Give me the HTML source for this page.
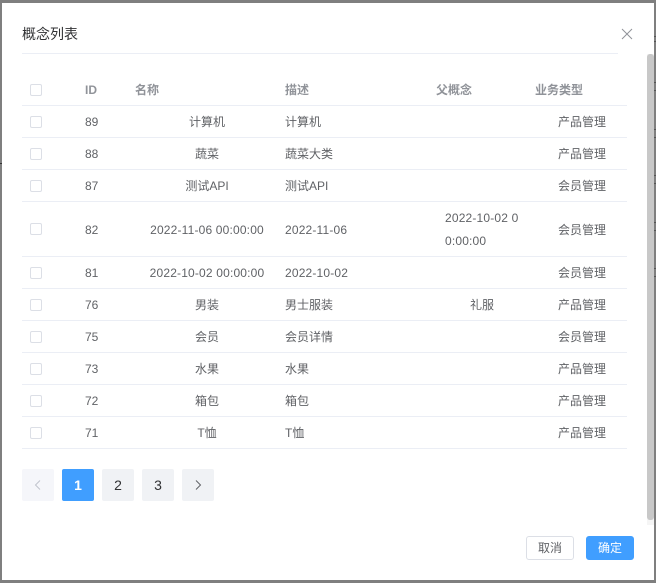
<!DOCTYPE html>
<html><head><meta charset="utf-8">
<style>
html,body{margin:0;padding:0;width:656px;height:583px;overflow:hidden;background:#7f7f7f}
body{position:relative;font-family:"WenQuanYi Zen Hei","Liberation Sans","Noto Sans CJK SC",sans-serif;font-size:12px;color:#606266}
#d{position:absolute;left:2px;top:3px;width:652px;height:577px;background:#fff}
.t,.c,.l,.b,.n{position:absolute}
.t{white-space:nowrap;line-height:16px;height:16px}
.m{transform:translateX(-50%)}
.s{letter-spacing:.17px}
.h{color:#909399;font-weight:bold}
.l{left:22px;width:605px;height:1px;background:#ebeef5}
.c{left:30px;width:10px;height:10px;border:1px solid #dcdfe6;border-radius:2px;background:#fff}
.n{top:469px;width:32px;height:32px;border-radius:2px;background:#f0f2f5;color:#303133;font-size:14px;line-height:32px;text-align:center}
.b{top:536px;height:24px;width:48px;box-sizing:border-box;border-radius:3px;line-height:22px;text-align:center;font-size:12px}
.k{position:absolute;left:654px;width:2px;height:1px;background:#555}
</style></head><body>
<div id="d"></div>
<div class="k" style="top:36px"></div><div class="k" style="top:41px"></div>
<div class="k" style="top:82px"></div><div class="k" style="top:90px"></div>
<div class="k" style="top:129px"></div><div class="k" style="top:137px"></div>
<div class="k" style="top:175px"></div><div class="k" style="top:183px"></div>
<div class="k" style="top:222px"></div><div class="k" style="top:230px"></div>
<div class="k" style="top:268px"></div><div class="k" style="top:276px"></div>
<div style="position:absolute;left:0;top:163px;width:2px;height:1px;background:#333"></div>

<div class="t" style="left:22px;top:26px;font-size:14px;color:#303133">概念列表</div>
<svg style="position:absolute;left:621px;top:28px" width="12" height="12" viewBox="0 0 12 12"><path d="M1 1L11 11M11 1L1 11" stroke="#909399" stroke-width="1" fill="none"/></svg>
<div class="l" style="top:53px;width:596px"></div>

<div style="position:absolute;left:647px;top:54px;width:7px;height:471px;background:#f5f5f5"></div>
<div style="position:absolute;left:647px;top:54px;width:7px;height:466px;background:#c8c8c8;border-radius:3px"></div>

<div class="c" style="top:84px"></div>
<div class="t h" style="left:85px;top:82px">ID</div>
<div class="t h" style="left:135px;top:82px">名称</div>
<div class="t h" style="left:285px;top:82px">描述</div>
<div class="t h" style="left:436px;top:82px">父概念</div>
<div class="t h" style="left:535px;top:82px">业务类型</div>
<div class="l" style="top:105px"></div>

<div class="c" style="top:116px"></div>
<div class="t" style="left:85px;top:114px">89</div>
<div class="t m" style="left:207px;top:114px">计算机</div>
<div class="t" style="left:285px;top:114px">计算机</div>
<div class="t" style="left:558px;top:114px">产品管理</div>
<div class="l" style="top:137px"></div>

<div class="c" style="top:148px"></div>
<div class="t" style="left:85px;top:146px">88</div>
<div class="t m" style="left:207px;top:146px">蔬菜</div>
<div class="t" style="left:285px;top:146px">蔬菜大类</div>
<div class="t" style="left:558px;top:146px">产品管理</div>
<div class="l" style="top:169px"></div>

<div class="c" style="top:180px"></div>
<div class="t" style="left:85px;top:178px">87</div>
<div class="t m" style="left:207px;top:178px">测试API</div>
<div class="t" style="left:285px;top:178px">测试API</div>
<div class="t" style="left:558px;top:178px">会员管理</div>
<div class="l" style="top:201px"></div>

<div class="c" style="top:223px"></div>
<div class="t" style="left:85px;top:222px">82</div>
<div class="t m s" style="left:207px;top:222px">2022-11-06 00:00:00</div>
<div class="t s" style="left:285px;top:222px">2022-11-06</div>
<div class="t s" style="left:445px;top:210px">2022-10-02 0</div>
<div class="t s" style="left:445px;top:233px">0:00:00</div>
<div class="t" style="left:558px;top:222px">会员管理</div>
<div class="l" style="top:256px"></div>

<div class="c" style="top:267px"></div>
<div class="t" style="left:85px;top:265px">81</div>
<div class="t m s" style="left:207px;top:265px">2022-10-02 00:00:00</div>
<div class="t s" style="left:285px;top:265px">2022-10-02</div>
<div class="t" style="left:558px;top:265px">会员管理</div>
<div class="l" style="top:288px"></div>

<div class="c" style="top:299px"></div>
<div class="t" style="left:85px;top:297px">76</div>
<div class="t m" style="left:207px;top:297px">男装</div>
<div class="t" style="left:285px;top:297px">男士服装</div>
<div class="t m" style="left:482px;top:297px">礼服</div>
<div class="t" style="left:558px;top:297px">产品管理</div>
<div class="l" style="top:320px"></div>

<div class="c" style="top:331px"></div>
<div class="t" style="left:85px;top:329px">75</div>
<div class="t m" style="left:207px;top:329px">会员</div>
<div class="t" style="left:285px;top:329px">会员详情</div>
<div class="t" style="left:558px;top:329px">会员管理</div>
<div class="l" style="top:352px"></div>

<div class="c" style="top:363px"></div>
<div class="t" style="left:85px;top:361px">73</div>
<div class="t m" style="left:207px;top:361px">水果</div>
<div class="t" style="left:285px;top:361px">水果</div>
<div class="t" style="left:558px;top:361px">产品管理</div>
<div class="l" style="top:384px"></div>

<div class="c" style="top:395px"></div>
<div class="t" style="left:85px;top:393px">72</div>
<div class="t m" style="left:207px;top:393px">箱包</div>
<div class="t" style="left:285px;top:393px">箱包</div>
<div class="t" style="left:558px;top:393px">产品管理</div>
<div class="l" style="top:416px"></div>

<div class="c" style="top:427px"></div>
<div class="t" style="left:85px;top:425px">71</div>
<div class="t m" style="left:207px;top:425px">T恤</div>
<div class="t" style="left:285px;top:425px">T恤</div>
<div class="t" style="left:558px;top:425px">产品管理</div>
<div class="l" style="top:448px"></div>

<div class="n" style="left:22px;background:#f5f6fa"><svg style="position:absolute;left:11px;top:11px" width="10" height="10" viewBox="0 0 10 10"><path d="M7 0.5L2.5 5L7 9.5" stroke="#c0c4cc" stroke-width="1" fill="none"/></svg></div>
<div class="n" style="left:62px;background:#409eff;color:#fff;font-weight:bold">1</div>
<div class="n" style="left:102px">2</div>
<div class="n" style="left:142px">3</div>
<div class="n" style="left:182px"><svg style="position:absolute;left:11px;top:11px" width="10" height="10" viewBox="0 0 10 10"><path d="M3 0.5L7.5 5L3 9.5" stroke="#606266" stroke-width="1" fill="none"/></svg></div>

<div class="b" style="left:526px;border:1px solid #dcdfe6;background:#fff;color:#606266">取消</div>
<div class="b" style="left:586px;border:1px solid #409eff;background:#409eff;color:#fff">确定</div>
</body></html>
